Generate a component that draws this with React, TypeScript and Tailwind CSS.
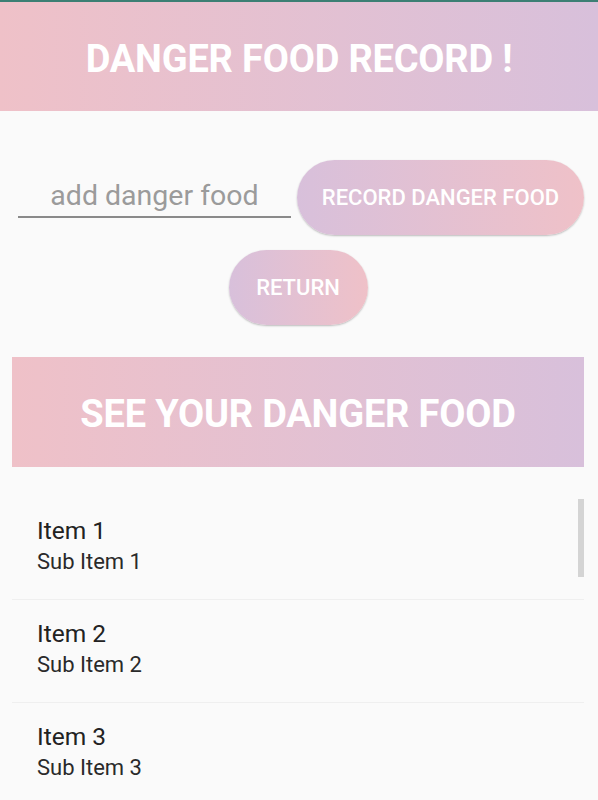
import { useState } from "react";

type Food = { title: string; sub: string };

const FOODS: Food[] = [
  { title: "Item 1", sub: "Sub Item 1" },
  { title: "Item 2", sub: "Sub Item 2" },
  { title: "Item 3", sub: "Sub Item 3" },
];

export default function App() {
  const [food, setFood] = useState("");

  return (
    <div className="relative w-[598px] h-[800px] overflow-hidden bg-[#fafafa] font-['Roboto',sans-serif]">
      {/* status strip */}
      <div className="h-[2px] bg-[#3c7f74]" />

      {/* ==== Header ==== */}
      <header className="h-[109px] pt-[6px] flex items-center justify-center bg-gradient-to-r from-[#efc1c8] to-[#d8c0db]">
        <h1 className="text-[38px] font-bold text-white tracking-[-0.2px]">
          DANGER FOOD RECORD !
        </h1>
      </header>

      <div className="pl-[12px] pr-[14px] pt-[49px]">
        {/* input + record */}
        <div className="flex items-start">
          <div className="ml-[6px] w-[273px] mt-[19px]">
            <input
              value={food}
              onChange={(e) => setFood(e.target.value)}
              placeholder="add danger food"
              className="w-full h-[34px] pb-[3px] box-content text-center text-[28.5px] leading-[34px] text-[#555] placeholder:text-[#9b9b9b] bg-transparent outline-none"
            />
            <div className="h-[2px] bg-[#8a8a8a]" />
          </div>
          <button className="ml-[6px] w-[287px] h-[75px] rounded-full bg-gradient-to-r from-[#d8c0db] to-[#efc1c8] shadow-[0_1px_2px_rgba(0,0,0,0.25)] text-white text-[22px] font-medium">
            RECORD DANGER FOOD
          </button>
        </div>

        {/* return */}
        <div className="flex justify-center mt-[15px]">
          <button className="w-[139px] h-[75px] rounded-full bg-gradient-to-r from-[#d8c0db] to-[#efc1c8] shadow-[0_1px_2px_rgba(0,0,0,0.25)] text-white text-[22px] font-medium">
            RETURN
          </button>
        </div>

        {/* banner */}
        <div className="mt-[32px] h-[110px] pt-1 flex items-center justify-center bg-gradient-to-r from-[#efc1c8] to-[#d8c0db]">
          <h2 className="text-[38px] font-bold text-white tracking-[-0.2px]">SEE YOUR DANGER FOOD</h2>
        </div>

        {/* list */}
        <ul className="mt-[30px]">
          {FOODS.map((f) => (
            <li key={f.title} className="pl-[25px] pt-[20px] pb-[22px] border-b border-[#efefef]">
              <p className="text-[24.5px] leading-[28px] text-[#222]">{f.title}</p>
              <p className="mt-[2px] text-[22px] leading-[30px] text-[#2a2a2a]">{f.sub}</p>
            </li>
          ))}
        </ul>
      </div>

      {/* scrollbar thumb */}
      <div className="absolute left-[578px] top-[499px] w-[6px] h-[78px] bg-[#d4d4d4]" />
    </div>
  );
}
